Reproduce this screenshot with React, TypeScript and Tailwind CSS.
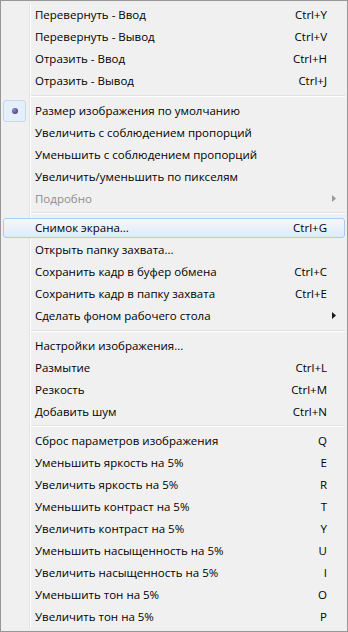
import { Fragment } from 'react';

type Item = {
  label: string;
  shortcut?: string;
  sub?: boolean;
  disabled?: boolean;
  checked?: boolean;
  active?: boolean;
};

const groups: Item[][] = [
  [
    { label: 'Перевернуть - Ввод', shortcut: 'Ctrl+Y' },
    { label: 'Перевернуть - Вывод', shortcut: 'Ctrl+V' },
    { label: 'Отразить - Ввод', shortcut: 'Ctrl+H' },
    { label: 'Отразить - Вывод', shortcut: 'Ctrl+J' },
  ],
  [
    { label: 'Размер изображения по умолчанию', checked: true },
    { label: 'Увеличить с соблюдением пропорций' },
    { label: 'Уменьшить с соблюдением пропорций' },
    { label: 'Увеличить/уменьшить по пикселям' },
    { label: 'Подробно', sub: true, disabled: true },
  ],
  [
    { label: 'Снимок экрана...', shortcut: 'Ctrl+G', active: true },
    { label: 'Открыть папку захвата...' },
    { label: 'Сохранить кадр в буфер обмена', shortcut: 'Ctrl+C' },
    { label: 'Сохранить кадр в папку захвата', shortcut: 'Ctrl+E' },
    { label: 'Сделать фоном рабочего стола', sub: true },
  ],
  [
    { label: 'Настройки изображения...' },
    { label: 'Размытие', shortcut: 'Ctrl+L' },
    { label: 'Резкость', shortcut: 'Ctrl+M' },
    { label: 'Добавить шум', shortcut: 'Ctrl+N' },
  ],
  [
    { label: 'Сброс параметров изображения', shortcut: 'Q' },
    { label: 'Уменьшить яркость на 5%', shortcut: 'E' },
    { label: 'Увеличить яркость на 5%', shortcut: 'R' },
    { label: 'Уменьшить контраст на 5%', shortcut: 'T' },
    { label: 'Увеличить контраст на 5%', shortcut: 'Y' },
    { label: 'Уменьшить насыщенность на 5%', shortcut: 'U' },
    { label: 'Увеличить насыщенность на 5%', shortcut: 'I' },
    { label: 'Уменьшить тон на 5%', shortcut: 'O' },
    { label: 'Увеличить тон на 5%', shortcut: 'P' },
  ],
];

function MenuRow({ item }: { item: Item }) {
  return (
    <div className="relative flex h-[22px] items-center">
      {item.active && (
        <div className="absolute inset-x-0 top-px bottom-px rounded-[3px] border border-[#a9cdf2] bg-linear-to-b from-[#f4f8fd] to-[#e0eaf7]" />
      )}
      {item.checked && (
        <div className="absolute left-0 top-0 flex h-[22px] w-[23px] items-center justify-center rounded-[3px] border border-[#c3d7ef] bg-[#e6eef9]">
          <div className="h-[6px] w-[6px] rounded-full bg-[radial-gradient(circle_at_35%_35%,#8f8fc8,#2a2a6a)]" />
        </div>
      )}
      <span
        className={
          'relative pl-[32px] ' + (item.disabled ? 'text-[#8d8d8d]' : 'text-black')
        }
      >
        {item.label}
      </span>
      <span className="relative ml-auto pr-[18px] text-black">{item.shortcut}</span>
      {item.sub && (
        <svg
          className="absolute right-[9px] top-[7px]"
          width="4"
          height="7"
          viewBox="0 0 4 7"
        >
          <path d="M0 0 L4 3.5 L0 7 Z" fill={item.disabled ? '#9a9a9a' : '#1a1a1a'} />
        </svg>
      )}
    </div>
  );
}

function Separator() {
  return (
    <div className="flex h-[7.5px] flex-col justify-center pl-[28px]">
      <div className="h-px bg-[#e0e0e0]" />
      <div className="h-px bg-white" />
    </div>
  );
}

export default function App() {
  return (
    <div
      className="relative h-[632px] w-[348px] border border-[#979797] bg-[#f0f0f0] px-[2px] py-[3px] text-[11.5px] leading-none"
      style={{ fontFamily: '"Open Sans", "Noto Sans", sans-serif' }}
    >
      {/* gutter */}
      <div className="absolute top-[3px] bottom-[3px] left-[28px] w-px bg-[#e2e3e3]" />
      <div className="absolute top-[3px] bottom-[3px] left-[29px] w-px bg-white" />
      <div className="relative flex flex-col">
        {groups.map((g, i) => (
          <Fragment key={i}>
            {i > 0 && <Separator />}
            {g.map((item) => (
              <MenuRow key={item.label} item={item} />
            ))}
          </Fragment>
        ))}
      </div>
    </div>
  );
}
